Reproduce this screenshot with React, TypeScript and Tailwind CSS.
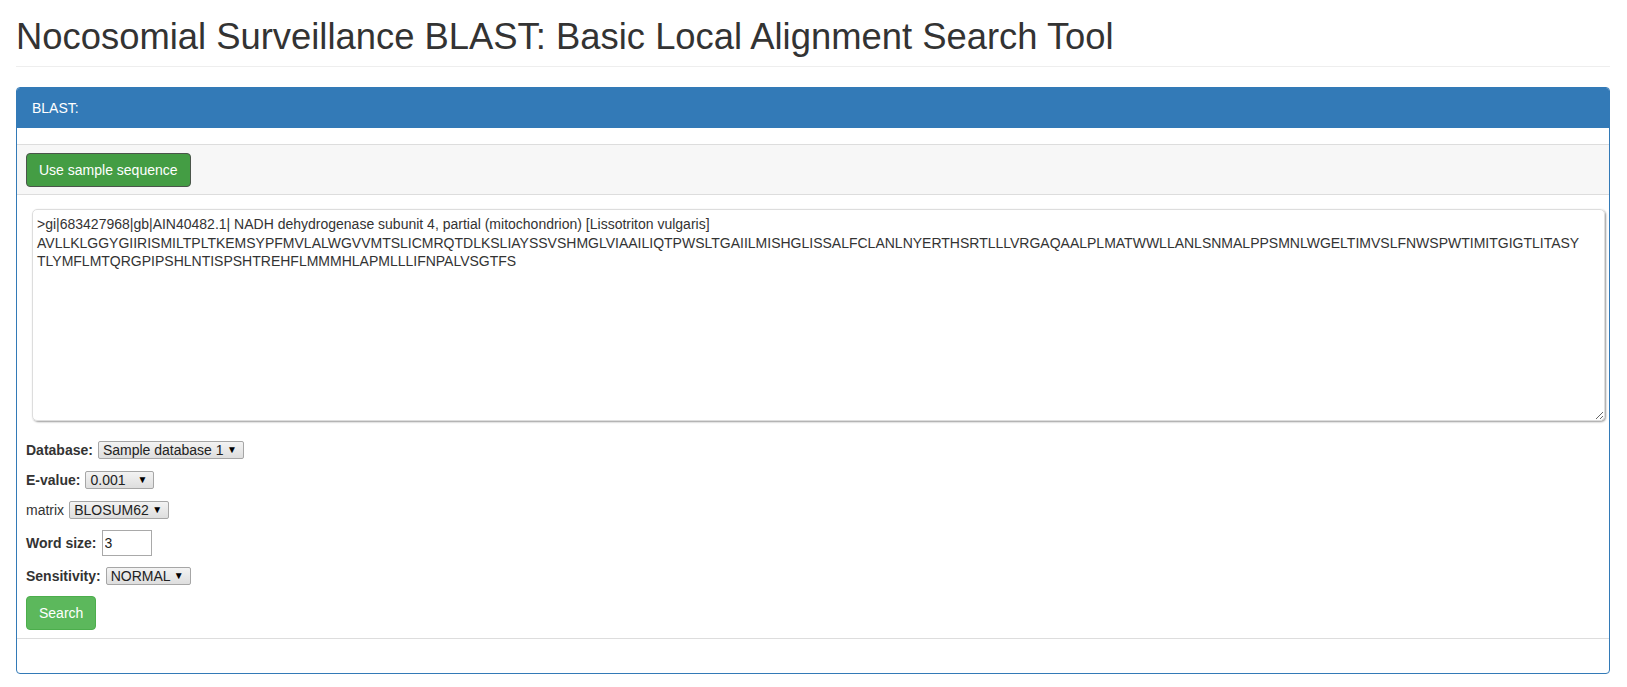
import { useState } from "react";

const header =
  ">gi|683427968|gb|AIN40482.1| NADH dehydrogenase subunit 4, partial (mitochondrion) [Lissotriton vulgaris]";
const seqA =
  "AVLLKLGGYGIIRISMILTPLTKEMSYPFMVLALWGVVMTSLICMRQTDLKSLIAYSSVSHMGLVIAAILIQTPWSLTGAIILMISHGLISSALFCLANLNYERTHSRTLLLVRGAQAALPLMATWWLLANLSNMALPPSMNLWGELTIMVSLFNWSPWTIMITGIGTLITASY";
const seqB = "TLYMFLMTQRGPIPSHLNTISPSHTREHFLMMMHLAPMLLLIFNPALVSGTFS";

function FakeSelect({ value, width }: { value: string; width: string }) {
  return (
    <span
      className={`inline-flex h-[18px] items-center justify-between rounded-[2px] border border-[#a6a6a6] bg-gradient-to-b from-[#f3f3f3] to-[#dedede] pl-[4px] pr-[6px] text-[14px] leading-[16px] text-[#222] ${width}`}
    >
      <span>{value}</span>
      <span className="text-[10px] text-black">▼</span>
    </span>
  );
}

function Row({ children }: { children: React.ReactNode }) {
  return <div className="flex h-[20px] items-center gap-[5px]">{children}</div>;
}

export default function App() {
  const [text, setText] = useState(`${header}\n${seqA}\n${seqB}`);

  return (
    <div className="min-h-screen bg-white font-['Liberation_Sans',Arial,sans-serif] text-[14px] leading-[20px] text-[#333]">
      <div className="ml-[16px] mr-[17px]">
        <h1 className="pt-[17px] text-[36.4px] leading-[40px] font-normal">
          Nocosomial Surveillance BLAST: Basic Local Alignment Search Tool
        </h1>
        <div className="mt-[9px] h-px bg-[#eee]" />

        {/* Panel */}
        <div className="mt-[20px] overflow-hidden rounded-[4px] border border-[#337ab7]">
          <div className="bg-[#337ab7] px-[15px] py-[10px] text-white">BLAST:</div>

          <div className="pt-[16px]">
            <div className="border-y border-[#ddd] bg-[#f7f7f7] px-[9px] pt-[8px] pb-[7px]">
              <button
                type="button"
                className="rounded-[4px] border border-[#4b554b] bg-[#449d44] px-[12px] py-[6px] text-[14px] leading-[20px] text-white"
                onClick={() => setText(`${header}\n${seqA}\n${seqB}`)}
              >
                Use sample sequence
              </button>
            </div>

            <div className="ml-[15px] mr-[4px] mt-[14px]">
              <textarea
                value={text}
                onChange={(e) => setText(e.target.value)}
                className="block h-[212px] w-full rounded-[5px] border border-[#ddd] px-[4px] pt-[5px] text-[14px] leading-[18.6px] text-[#333] shadow-[1px_1px_2px_rgba(0,0,0,0.4)] outline-none"
              />
            </div>

            {/* Search options */}
            <div className="ml-[9px] mt-[19px] flex flex-col gap-[10px] pb-[8px]">
              <Row>
                <b>Database:</b>
                <FakeSelect value="Sample database 1" width="w-[146px]" />
              </Row>
              <Row>
                <b>E-value:</b>
                <FakeSelect value="0.001" width="w-[69px]" />
              </Row>
              <Row>
                <span>matrix</span>
                <FakeSelect value="BLOSUM62" width="w-[100px]" />
              </Row>
              <div className="flex h-[26px] items-center gap-[5px]">
                <b>Word size:</b>
                <input
                  defaultValue="3"
                  className="h-[26px] w-[50px] border border-[#a9a9a9] px-[2px] text-[14px] text-[#222] outline-none"
                />
              </div>
              <Row>
                <b>Sensitivity:</b>
                <FakeSelect value="NORMAL" width="w-[85px]" />
              </Row>
              <div>
                <button
                  type="button"
                  className="rounded-[4px] border border-[#4cae4c] bg-[#5cb85c] px-[12px] py-[6px] text-[14px] leading-[20px] text-white"
                >
                  Search
                </button>
              </div>
            </div>

            <div className="h-[35px] border-t border-[#ddd]" />
          </div>
        </div>
      </div>
    </div>
  );
}
